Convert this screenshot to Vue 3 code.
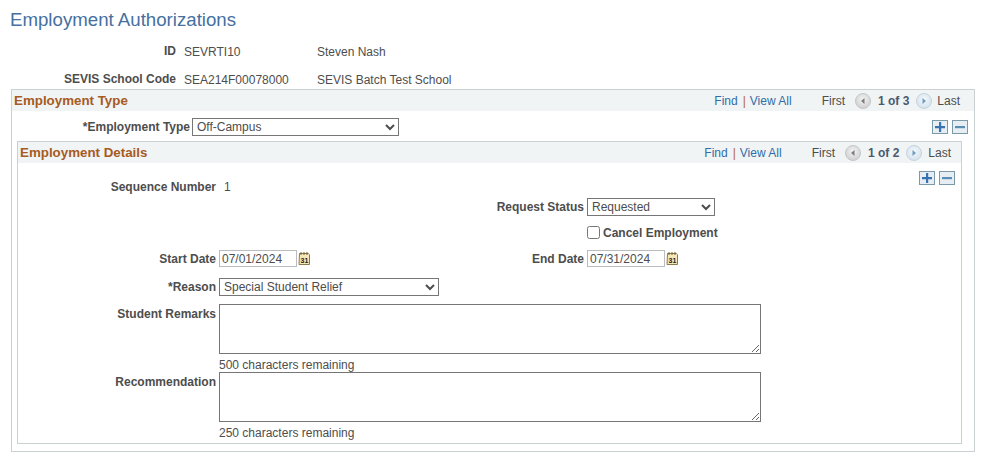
<script setup>
const typeOptions = ['Off-Campus', 'On-Campus']
const statusOptions = ['Requested', 'Approved']
const reasonOptions = ['Special Student Relief', 'Economic Hardship']
</script>

<template>
  <div class="page">
    <h1 class="title">Employment Authorizations</h1>

    <div class="key-row">
      <span class="label key-label">ID</span>
      <span class="key-value">SEVRTI10</span>
      <span>Steven Nash</span>
    </div>
    <div class="key-row">
      <span class="label key-label">SEVIS School Code</span>
      <span class="key-value">SEA214F00078000</span>
      <span>SEVIS Batch Test School</span>
    </div>

    <section class="box outer">
      <header class="box-head outer-head">
        <h2>Employment Type</h2>
        <nav class="pager">
          <a>Find</a><i class="sep">|</i><a class="view-all">View All</a>
          <span class="first">First</span>
          <svg class="nav-icon" width="16" height="16" viewBox="0 0 16 16">
            <defs>
              <radialGradient id="navGrey" cx="50%" cy="40%" r="60%">
                <stop offset="0%" stop-color="#f4f4f4" />
                <stop offset="100%" stop-color="#cfcfcf" />
              </radialGradient>
            </defs>
            <circle cx="8" cy="8" r="7.5" fill="url(#navGrey)" stroke="#c4c6c8" />
            <path d="M9.500 5v6L6 8z" fill="#7d7d7d" />
          </svg>
          <b class="count">1 of 3</b>
          <svg class="nav-icon" width="16" height="16" viewBox="0 0 16 16">
            <defs>
              <radialGradient id="navBlue" cx="50%" cy="40%" r="60%">
                <stop offset="0%" stop-color="#f4f8fb" />
                <stop offset="100%" stop-color="#d3e2ee" />
              </radialGradient>
            </defs>
            <circle cx="8" cy="8" r="7.5" fill="url(#navBlue)" stroke="#c6d3dd" />
            <path d="M6.500 5v6L10 8z" fill="#6f9cc0" />
          </svg>
          <span class="last">Last</span>
        </nav>
      </header>

      <div class="type-row">
        <label class="label type-label">*Employment Type</label>
        <select class="type-select">
          <option v-for="o in typeOptions" :key="o">{{ o }}</option>
        </select>
        <div class="row-btns">
          <button class="row-btn"><svg width="10" height="10" viewBox="0 0 10 10"><path d="M4 0h2.200v4H10v2.200H6.200V10H4V6.200H0V4h4z" fill="#3a72b0" /></svg></button>
          <button class="row-btn"><svg width="10" height="10" viewBox="0 0 10 10"><path d="M0 4h10v2.200H0z" fill="#5b8db5" /></svg></button>
        </div>
      </div>

      <section class="box inner">
        <header class="box-head inner-head">
          <h2>Employment Details</h2>
          <nav class="pager">
            <a>Find</a><i class="sep">|</i><a class="view-all">View All</a>
            <span class="first">First</span>
            <svg class="nav-icon" width="16" height="16" viewBox="0 0 16 16">
              <circle cx="8" cy="8" r="7.5" fill="url(#navGrey)" stroke="#c4c6c8" />
              <path d="M9.500 5v6L6 8z" fill="#7d7d7d" />
            </svg>
            <b class="count">1 of 2</b>
            <svg class="nav-icon" width="16" height="16" viewBox="0 0 16 16">
              <circle cx="8" cy="8" r="7.5" fill="url(#navBlue)" stroke="#c6d3dd" />
              <path d="M6.500 5v6L10 8z" fill="#6f9cc0" />
            </svg>
            <span class="last">Last</span>
          </nav>
        </header>

        <div class="details">
          <span class="label seq-label">Sequence Number</span>
          <span class="seq-value">1</span>
          <div class="row-btns detail-btns">
            <button class="row-btn"><svg width="10" height="10" viewBox="0 0 10 10"><path d="M4 0h2.200v4H10v2.200H6.200V10H4V6.200H0V4h4z" fill="#3a72b0" /></svg></button>
            <button class="row-btn"><svg width="10" height="10" viewBox="0 0 10 10"><path d="M0 4h10v2.200H0z" fill="#5b8db5" /></svg></button>
          </div>

          <span class="label status-label">Request Status</span>
          <select class="status-select">
            <option v-for="o in statusOptions" :key="o">{{ o }}</option>
          </select>

          <label class="cancel">
            <input type="checkbox" />
            <span>Cancel Employment</span>
          </label>

          <span class="label start-label">Start Date</span>
          <div class="date-field start-field">
            <input class="date" value="07/01/2024" />
            <svg class="cal" width="13" height="15" viewBox="0 0 13 15">
              <path d="M1.500 2.500h9l1 1v10h-10.500z" fill="#f6e7b8" stroke="#8a7a4e" />
              <path d="M3 1v3M6 1v3M9 1v3" stroke="#6b5c36" />
              <text x="2.500" y="12" class="cal-text">31</text>
            </svg>
          </div>
          <span class="label end-label">End Date</span>
          <div class="date-field end-field">
            <input class="date" value="07/31/2024" />
            <svg class="cal" width="13" height="15" viewBox="0 0 13 15">
              <path d="M1.500 2.500h9l1 1v10h-10.500z" fill="#f6e7b8" stroke="#8a7a4e" />
              <path d="M3 1v3M6 1v3M9 1v3" stroke="#6b5c36" />
              <text x="2.500" y="12" class="cal-text">31</text>
            </svg>
          </div>

          <span class="label reason-label">*Reason</span>
          <select class="reason-select">
            <option v-for="o in reasonOptions" :key="o">{{ o }}</option>
          </select>

          <span class="label top remarks-label">Student Remarks</span>
          <textarea class="remarks"></textarea>
          <span class="remaining remarks-left">500 characters remaining</span>

          <span class="label top rec-label">Recommendation</span>
          <textarea class="rec"></textarea>
          <span class="remaining rec-left">250 characters remaining</span>
        </div>
      </section>
    </section>
  </div>
</template>

<style scoped>
.page {
  width: 981px;
  height: 459px;
  overflow: hidden;
  font-family: "Liberation Sans", Arial, sans-serif;
  font-size: 12px;
  color: #4d4d4d;
}

.title {
  margin: 0;
  padding: 9px 0 0 10px;
  font-size: 18.67px;
  line-height: 21px;
  font-weight: 400;
  color: #46709f;
}

.label {
  font-weight: 700;
  text-align: right;
  white-space: nowrap;
}

.key-row {
  display: flex;
  margin-top: 14px;
  line-height: 14px;
}

.title + .key-row {
  margin-top: 15px;
}

.key-label {
  width: 176px;
  margin-top: -1px;
}

.key-value {
  width: 133px;
  margin-left: 8px;
}

.box {
  border: 1px solid #cbd0d3;
  background: #fff;
}

.outer {
  width: 962px;
  margin: 2px 0 0 11px;
  padding-bottom: 7px;
}

.box-head {
  display: flex;
  align-items: center;
  justify-content: space-between;
  height: 21px;
  background: #f1f4f5;
}

.box-head h2 {
  margin: 0;
  font-size: 13.33px;
  font-weight: 700;
  color: #a65b1f;
}

.outer-head {
  padding: 0 14px 0 2px;
}

.inner-head {
  padding: 0 10px 0 2px;
}

.pager {
  display: flex;
  align-items: center;
  color: #4d4d4d;
}

.pager a {
  color: #2f6ea8;
}

.sep {
  margin-left: 5px;
  font-style: normal;
  color: #b5651d;
}

.view-all {
  margin-left: 4px;
}

.first {
  margin-left: 30px;
}

.nav-icon {
  margin-left: 10px;
}

.count {
  margin-left: 7px;
  color: #4a5a70;
}

.count + .nav-icon {
  margin-left: 7px;
}

.last {
  margin-left: 5px;
}

.inner-head .last {
  margin-left: 6px;
}

.type-row {
  display: flex;
  align-items: center;
  height: 18px;
  margin: 7px 0 5px;
  padding-right: 6px;
}

.type-label {
  width: 178px;
}

select {
  font: 12px "Liberation Sans", Arial, sans-serif;
  color: #4d4d4d;
  height: 18px;
  background: #fff;
}

.type-select {
  width: 207px;
  margin-left: 2px;
}

.row-btns {
  display: flex;
  gap: 4px;
  margin-left: auto;
}

.row-btn {
  display: flex;
  align-items: center;
  justify-content: center;
  width: 16px;
  height: 14px;
  padding: 0;
  border: 1px solid #7b9aa8;
  border-radius: 0;
  background: #e6eef3;
}

.inner {
  width: 943px;
  margin-left: 5px;
}

.details {
  display: grid;
  grid-template-columns: 198px 268px 94px 174px 1fr;
  grid-template-rows: 26px 20px 30px 23px 34px 50px 18px 50px 18px;
  column-gap: 3px;
  align-items: center;
  padding: 8px 6px 3px 0;
}

.seq-label {
  grid-area: 1 / 1;
  align-self: start;
  margin-top: 9px;
}

.seq-value {
  grid-area: 1 / 2;
  align-self: start;
  margin: 9px 0 0 5px;
}

.detail-btns {
  grid-area: 1 / 5;
  align-self: start;
}

.status-label {
  grid-area: 2 / 1 / 3 / 4;
}

.status-select {
  grid-area: 2 / 4;
  width: 128px;
}

.cancel {
  grid-area: 3 / 4;
  display: flex;
  align-items: center;
  gap: 3px;
  font-weight: 700;
  white-space: nowrap;
}

.cancel input {
  width: 13px;
  height: 13px;
  margin: 0;
}

.cancel span {
  padding-top: 1px;
}

.start-label {
  grid-area: 4 / 1;
  padding-top: 1px;
}

.start-field {
  grid-area: 4 / 2;
}

.end-label {
  grid-area: 4 / 3;
  padding-top: 1px;
}

.end-field {
  grid-area: 4 / 4;
}

.date-field {
  display: flex;
  align-items: center;
  gap: 1px;
}

.date {
  box-sizing: border-box;
  width: 78px;
  height: 17px;
  padding: 0 2px;
  border: 1px solid #b9bdc0;
  font: 12px "Liberation Sans", Arial, sans-serif;
  color: #4d4d4d;
  outline: none;
}

.cal-text {
  font: 700 7px "Liberation Sans", Arial, sans-serif;
  fill: #222;
}

.reason-label {
  grid-area: 5 / 1;
}

.reason-select {
  grid-area: 5 / 2;
  width: 220px;
}

.top {
  align-self: start;
  padding-top: 3px;
}

.remarks-label {
  grid-area: 6 / 1;
}

.remarks {
  grid-area: 6 / 2 / 7 / 5;
}

.rec-label {
  grid-area: 8 / 1;
}

.rec {
  grid-area: 8 / 2 / 9 / 5;
}

textarea {
  box-sizing: border-box;
  width: 542px;
  height: 50px;
  margin: 0;
  border: 1px solid #767676;
  background: #fff;
}

.remaining {
  align-self: end;
  line-height: 14px;
  white-space: nowrap;
}

.remarks-left {
  grid-area: 7 / 2 / 8 / 5;
}

.rec-left {
  grid-area: 9 / 2 / 10 / 5;
}
</style>
